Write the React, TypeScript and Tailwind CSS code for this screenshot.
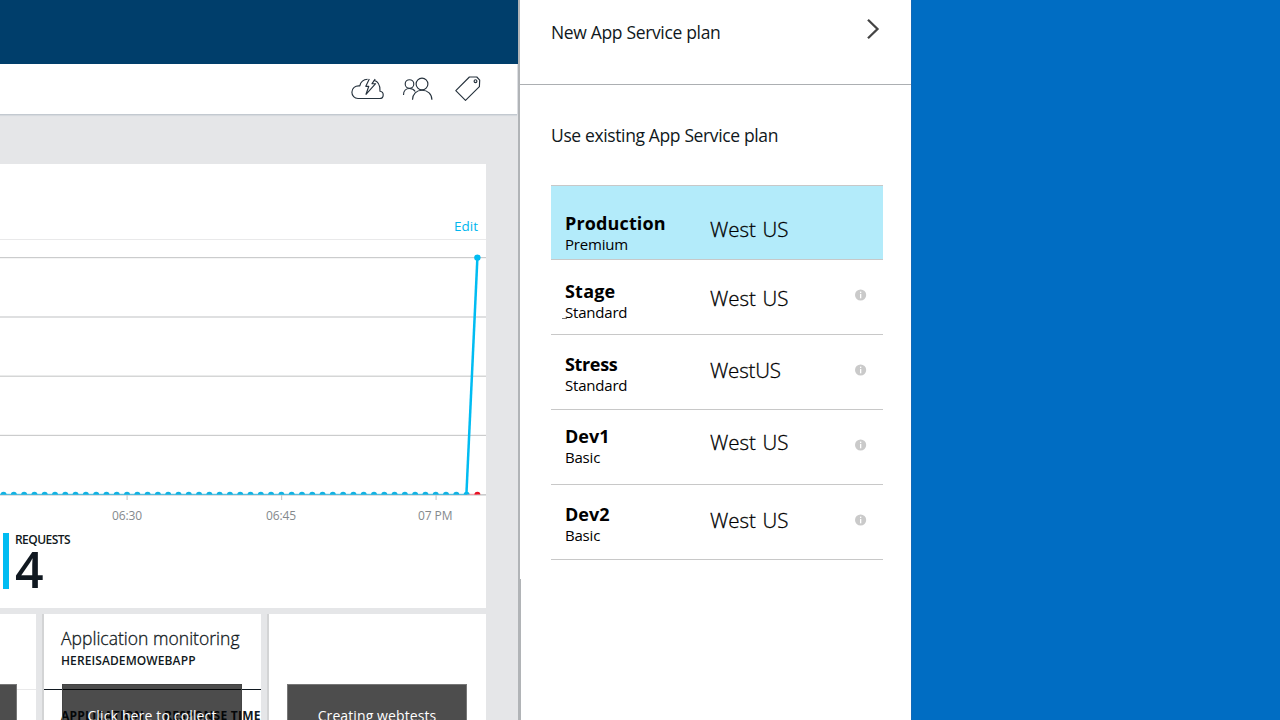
import React from "react";

type Plan = {
  name: string;
  tier: string;
  region: string;
  rowClass: string;
  nameClass: string;
  regionClass: string;
  infoClass?: string;
  mark?: boolean;
};

const plans: Plan[] = [
  { name: "Production", tier: "Premium", region: "West US", rowClass: "h-[74px] pt-[25px] bg-[#b3ebfa]", nameClass: "tracking-[0.13px]", regionClass: "mt-[4px] tracking-[-0.05px] [word-spacing:1.5px]" },
  { name: "Stage", tier: "Standard", region: "West US", rowClass: "h-[75px] pt-[19px]", nameClass: "tracking-[0.2px]", regionClass: "mt-[5px] tracking-[-0.05px] [word-spacing:1.5px]", infoClass: "mt-[10px]", mark: true },
  { name: "Stress", tier: "Standard", region: "WestUS", rowClass: "h-[75px] pt-[17px]", nameClass: "tracking-[-0.35px]", regionClass: "mt-[4px] tracking-[-0.2px]", infoClass: "mt-[12px]" },
  { name: "Dev1", tier: "Basic", region: "West US", rowClass: "h-[75px] pt-[14px]", nameClass: "tracking-[0px]", regionClass: "mt-[4px] tracking-[-0.05px] [word-spacing:1.5px]", infoClass: "mt-[15px]" },
  { name: "Dev2", tier: "Basic", region: "West US", rowClass: "h-[75px] pt-[17px]", nameClass: "tracking-[0px]", regionClass: "mt-[4px] tracking-[-0.05px] [word-spacing:1.5px]", infoClass: "mt-[12px]" },
];

function InfoIcon() {
  return (
    <svg width="12" height="12" viewBox="0.4 0 12 12" className="block">
      <circle cx="6" cy="6" r="5.6" fill="#cacaca" />
      <rect x="5.4" y="2.6" width="1.3" height="1.4" fill="#fff" />
      <rect x="5.4" y="4.9" width="1.3" height="4.4" fill="#fff" />
    </svg>
  );
}

function PlanRow({ plan }: { plan: Plan }) {
  return (
    <li className={`flex border-b border-[#c8c8c8] pl-[14px] ${plan.rowClass}`}>
      <div className="w-[145px] shrink-0">
        <div className={`h-[24px] text-[18px] leading-[24px] font-bold ${plan.nameClass}`}>{plan.name}</div>
        <div className="relative h-[18px] text-[15px] leading-[18px] tracking-[-0.2px]">
          {plan.mark && <span className="absolute bottom-[2px] left-[-3px] h-px w-[5px] bg-[#777]" />}
          {plan.tier}
        </div>
      </div>
      <div className={`h-[28px] w-[145px] shrink-0 text-[20.5px] leading-[28px] font-light whitespace-nowrap [-webkit-text-stroke:0.3px_black] ${plan.regionClass}`}>{plan.region}</div>
      {plan.infoClass && <div className={plan.infoClass}><InfoIcon /></div>}
    </li>
  );
}

function Toolbar() {
  return (
    <div className="flex h-[50px] shrink-0 bg-white pl-[345px] shadow-[0_1px_1px_#c3c9d0,0_2px_1px_#d9dce0]">
      <svg width="150" height="50" viewBox="345 64 150 50" fill="none" stroke="#26323d" strokeWidth="1.15" strokeLinejoin="round">
        <path d="M373.8 80.2 C378 81.2 380.3 84.6 380 91.2 C382 91.4 383.2 93 383.2 94.9 C383.2 97 381.8 98.5 379.4 98.5 H358 C354.4 98.5 351.9 95.6 351.9 92.2 C351.9 88.3 355.1 85.4 359.8 85.9 C360.6 82.2 363.6 79.5 367.6 79.3" />
        <path d="M369.3 79 L365.8 86.3 H368.8 L366 94.3 L375.6 83.7 H372 L375.2 79.2" />
        <circle cx="409.5" cy="84" r="4.3" />
        <circle cx="422" cy="84" r="5.9" />
        <path d="M403.5 95 C403.5 91 406 88.5 409.5 88.5 C412 88.5 414 89.6 415.2 91.5 M412.5 99.8 C412.5 94 416.5 90.2 422 90.2 C427.8 90.2 431.9 94 431.9 99.8" />
        <path d="M469.4 77 L476.8 77 L479.7 80.1 L479.4 86.7 L465.5 100.3 L455.8 90.7 Z" />
        <circle cx="475.5" cy="81.2" r="1.4" />
      </svg>
    </div>
  );
}

const dots = Array.from({ length: 46 }, (_, i) => 466.6 - i * 10.29);

function Chart() {
  return (
    <svg width="486" height="262" viewBox="0 240 486 262" className="block">
      <g fill="#cbcccd">
        <rect x="0" y="257" width="486" height="1.2" />
        <rect x="0" y="316.4" width="486" height="1.2" />
        <rect x="0" y="375.6" width="486" height="1.2" />
        <rect x="0" y="434.8" width="486" height="1.2" />
        <rect x="126.5" y="495" width="1.2" height="5" />
        <rect x="281" y="495" width="1.2" height="5" />
        <rect x="435.5" y="495" width="1.2" height="5" />
        <rect x="0" y="494" width="486" height="1.6" />
      </g>
      <rect x="0" y="493.8" width="467" height="1.1" fill="#4dbddf" />
      <rect x="467" y="493.8" width="10" height="1" fill="#f39aa4" />
      <svg x="0" y="480" width="486" height="14.4" viewBox="0 480 486 14.4">
        {dots.map((x) => (
          <circle key={x} cx={x} cy="494.8" r="3" fill="#12b2e3" />
        ))}
        <circle cx="477.4" cy="494.8" r="3" fill="#e81123" />
      </svg>
      <path d="M466.4 494.2 L477.4 257.6" stroke="#00bcf2" strokeWidth="2.5" fill="none" />
      <circle cx="477.4" cy="257.6" r="3.2" fill="#00bcf2" />
    </svg>
  );
}

function Tile({ children, className }: { children?: React.ReactNode; className: string }) {
  return <div className={`relative h-[106px] shrink-0 overflow-hidden bg-white ${className}`}>{children}</div>;
}

export default function App() {
  return (
    <div className="flex h-[720px] w-[1280px] overflow-hidden bg-white font-['Open_Sans','Noto_Sans',sans-serif] text-[#101820]">
      <section className="flex w-[518px] shrink-0 flex-col overflow-hidden bg-[#e5e6e8]">
        <div className="h-[64px] shrink-0 bg-[#003e6b]" />
        <div className="w-[517px]">
          <Toolbar />
        </div>
        <div className="mt-[50px] h-[444px] w-[486px] shrink-0 bg-white">
          <div className="flex h-[76px] justify-end border-b border-[#e9e9ea] pt-[53px] pr-[8px] text-[13.5px] leading-[18px] text-[#00b6ee]">Edit</div>
          <Chart />
          <div className="flex h-[26px] pt-[5px] text-[12px] leading-[18px] tracking-[-0.1px] text-[#84898d]">
            <div className="w-[154px] pl-[112px]">06:30</div>
            <div className="w-[154px] pl-[112px]">06:45</div>
            <div className="pl-[110px] whitespace-nowrap">07 PM</div>
          </div>
          <div className="mt-[5px] ml-[3px] flex h-[56px] border-l-[6px] border-[#00bcf2] pl-[6px]">
            <div>
              <div className="h-[14px] text-[12px] leading-[14px] font-semibold tracking-[-0.55px]">REQUESTS</div>
              <div className="h-[42px] text-[50px] leading-[45px] font-semibold">4</div>
            </div>
          </div>
        </div>
        <div className="mt-[6px] flex">
          <Tile className="w-[36px]">
            <div className="h-[76px] border-b border-[#e9e9ea]" />
            <div className="absolute top-[70px] left-0 h-[40px] w-[17px] border-t border-r border-[#777] bg-[#4d4d4d]" />
          </Tile>
          <Tile className="ml-[6px] w-[219px] border-l-2 border-[#d3d4d5]">
            <div className="h-[76px] border-b border-[#101820] pt-[12px] pl-[17px]">
              <div className="h-[26px] text-[17.5px] leading-[24px] font-light tracking-[0.02px] whitespace-nowrap [-webkit-text-stroke:0.3px_#101820]">Application monitoring</div>
              <div className="h-[18px] text-[12px] leading-[18px] font-semibold tracking-[0.1px]">HEREISADEMOWEBAPP</div>
            </div>
            <div className="flex pt-[17px] pl-[17px] text-[12px] leading-[18px] font-bold tracking-[0.25px] whitespace-nowrap">
              <span className="w-[103px]">APPLICATION</span>
              <span>RESPONSE TIME</span>
            </div>
            <div className="absolute top-[70px] left-[18px] h-[40px] w-[180px] border border-[#444] bg-black/70 pt-[21px] text-center text-[14px] leading-[20px] tracking-[0.15px] text-white">Click here to collect</div>
          </Tile>
          <Tile className="ml-[6px] w-[219px] border-l-2 border-[#d3d4d5]">
            <div className="absolute top-[70px] left-[18px] h-[40px] w-[180px] border border-[#777] bg-[#4d4d4d] pt-[21px] text-center text-[14px] leading-[20px] tracking-[0.1px] text-white">Creating webtests</div>
          </Tile>
        </div>
      </section>

      <div className="flex w-[3px] shrink-0 flex-col">
        <div className="h-[579px] w-[2px] bg-[#b1b4b7]" />
        <div className="w-[3px] grow bg-[#b1b4b7]" />
      </div>

      <section className="-ml-px w-[391px] shrink-0">
        <div className="flex h-[85px] justify-between border-b border-[#acafb2] pr-[30px] pl-[31px]">
          <h2 className="pt-[20px] text-[17.5px] leading-[24px] tracking-[-0.34px]">New App Service plan</h2>
          <svg width="16" height="24" viewBox="865 17 16 24" className="mt-[17px]" fill="none" stroke="#444" strokeWidth="2.3">
            <path d="M868 19.7 L877.5 29 L868 38.3" />
          </svg>
        </div>
        <h2 className="mt-[38px] pl-[31px] text-[17.5px] leading-[24px] tracking-[-0.37px]">Use existing App Service plan</h2>
        <ul className="mt-[38px] ml-[31px] w-[332px] border-t border-[#c8c8c8] text-black">
          {plans.map((p) => (
            <PlanRow key={p.name} plan={p} />
          ))}
        </ul>
      </section>

      <div className="grow border-l border-[#1269b8] bg-[#006dc3]" />
    </div>
  );
}
